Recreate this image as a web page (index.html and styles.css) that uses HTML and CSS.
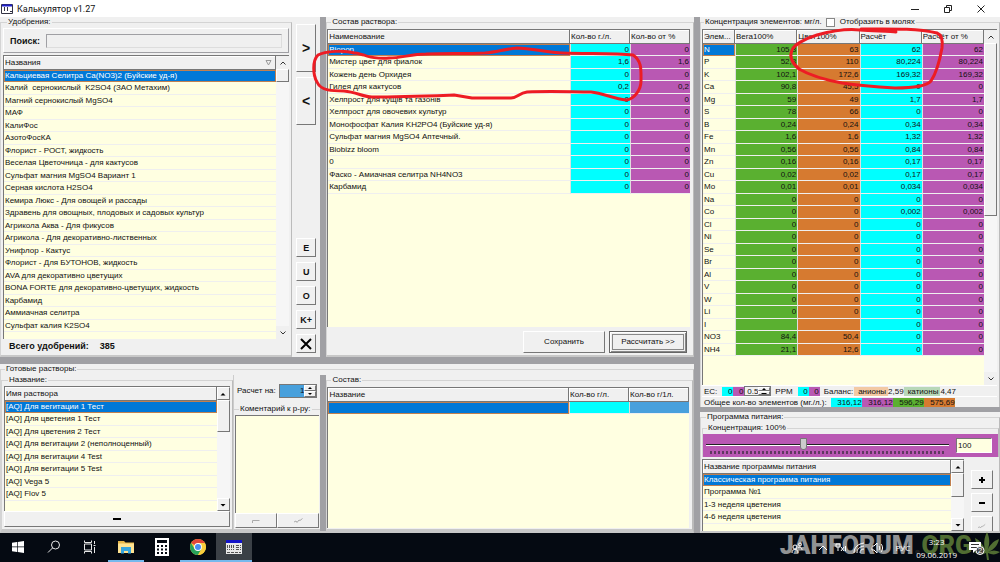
FILE: index.html
```html
<!DOCTYPE html>
<html lang="ru">
<head>
<meta charset="utf-8">
<title>Калькулятор v1.27</title>
<link rel="stylesheet" href="styles.css">
</head>
<body>
<header class="titlebar">
  <svg class="app-icon" viewBox="0 0 12 10"><path fill="#fff" stroke="#334" d="M.5.5h11v9H.5z"/><path stroke="#22c" stroke-width="2" d="M1 1.5h10"/><path stroke="#334" d="M3.500 3v5M6.500 3v5M9 7.500h2" stroke-dasharray="4 1"/></svg>
  <h1>Калькулятор v1.27</h1>
  <div class="window-buttons">
    <button aria-label="Свернуть"><svg viewBox="0 0 10 10"><path d="M1 5.500h8"/></svg></button>
    <button aria-label="Развернуть"><svg viewBox="0 0 10 10"><path d="M1.500 3.500h5v5h-5zM3.500 3.500v-2h5v5h-2"/></svg></button>
    <button aria-label="Закрыть"><svg viewBox="0 0 10 10"><path d="M1.500 1.500l7 7M8.500 1.500l-7 7"/></svg></button>
  </div>
</header>

<main class="workspace">
  <div class="left">
    <div class="upper">
      <fieldset class="group fertilizers">
        <legend>Удобрения:</legend>
        <div class="search"><label for="q">Поиск:</label><input id="q" type="text"></div>
        <div class="list">
          <div class="view"><table class="names">
            <thead><tr><th>Названия<svg class="sort" viewBox="0 0 7 6"><path d="M1 .5h5L3.500 5z"/></svg></th></tr></thead>
            <tbody>
            <tr class="sel"><td>Кальциевая Селитра Ca(NO3)2 (Буйские уд-я)</td></tr>
            <tr><td>Калий&nbsp; сернокислый&nbsp; K2SO4 (ЗАО Метахим)</td></tr>
            <tr><td>Магний сернокислый MgSO4</td></tr>
            <tr><td>МАФ</td></tr>
            <tr><td>КалиФос</td></tr>
            <tr><td>АзотоФосКА</td></tr>
            <tr><td>Флорист - РОСТ, жидкость</td></tr>
            <tr><td>Веселая Цветочница - для кактусов</td></tr>
            <tr><td>Сульфат магния MgSO4 Вариант 1</td></tr>
            <tr><td>Серная кислота H2SO4</td></tr>
            <tr><td>Кемира Люкс - Для овощей и рассады</td></tr>
            <tr><td>Здравень для овощных, плодовых и садовых культур</td></tr>
            <tr><td>Агрикола Аква - Для фикусов</td></tr>
            <tr><td>Агрикола - Для декоративно-лиственных</td></tr>
            <tr><td>Унифлор - Кактус</td></tr>
            <tr><td>Флорист - Для БУТОНОВ, жидкость</td></tr>
            <tr><td>AVA для декоративно цветущих</td></tr>
            <tr><td>BONA FORTE для декоративно-цветущих, жидкость</td></tr>
            <tr><td>Карбамид</td></tr>
            <tr><td>Аммиачная селитра</td></tr>
            <tr><td>Сульфат калия K2SO4</td></tr>
            </tbody>
          </table></div>
          <div class="scroll flat">
            <button aria-label="Вверх"><svg viewBox="0 0 8 8"><path class="chev" d="M1.500 5.500L4 3l2.500 2.500"/></svg></button>
            <i class="thumb short"></i><span></span>
            <button aria-label="Вниз"><svg viewBox="0 0 8 8"><path class="chev" d="M1.500 2.500L4 5l2.500-2.500"/></svg></button>
          </div>
        </div>
        <p class="total"><b>Всего удобрений:</b><b>385</b></p>
      </fieldset>
      <div class="transfer">
        <button class="tall">&gt;</button>
        <button class="tall">&lt;</button>
        <span></span>
        <button>E</button><button>U</button><button>O</button><button>K+</button>
        <button aria-label="Удалить"><svg viewBox="0 0 12 12"><path d="M1 1l10 10M11 1L1 11"/></svg></button>
      </div>
      <i class="vsplit"></i>
      <fieldset class="group solution">
        <legend>Состав раствора:</legend>
        <div class="list">
          <div class="view"><table class="mix">
            <colgroup><col><col class="amount"><col class="amount"></colgroup>
            <thead><tr><th>Наименование</th><th>Кол-во г./л.</th><th>Кол-во от %</th></tr></thead>
            <tbody>
            <tr class="sel"><td>Biopon</td><td>0</td><td>0</td></tr>
            <tr><td>Мистер цвет для фиалок</td><td>1,6</td><td>1,6</td></tr>
            <tr><td>Кожень день Орхидея</td><td>0</td><td>0</td></tr>
            <tr><td>Гилея для кактусов</td><td>0,2</td><td>0,2</td></tr>
            <tr><td>Хелпрост для кущів та газонів</td><td>0</td><td>0</td></tr>
            <tr><td>Хелпрост для овочевих культур</td><td>0</td><td>0</td></tr>
            <tr><td>Монофосфат Калия KH2PO4 (Буйские уд-я)</td><td>0</td><td>0</td></tr>
            <tr><td>Сульфат магния MgSO4 Аптечный.</td><td>0</td><td>0</td></tr>
            <tr><td>Biobizz bloom</td><td>0</td><td>0</td></tr>
            <tr><td>0</td><td>0</td><td>0</td></tr>
            <tr><td>Фаско - Амиачная селитра NH4NO3</td><td>0</td><td>0</td></tr>
            <tr><td>Карбамид</td><td>0</td><td>0</td></tr>
            </tbody>
          </table></div>
        </div>
        <div class="actions"><button>Сохранить</button><button class="default">Рассчитать &gt;&gt;</button></div>
      </fieldset>
    </div>
    <i class="hsplit"></i>
    <fieldset class="group ready">
      <legend>Готовые растворы:</legend>
      <div class="ready-row">
        <fieldset class="group saved">
          <legend>Название:</legend>
          <div class="list">
            <div class="view"><table class="names">
              <thead><tr><th>Имя раствора</th></tr></thead>
              <tbody>
              <tr class="sel"><td>[AQ] Для вегитации 1 Тест</td></tr>
              <tr><td>[AQ] Для цветения 1 Тест</td></tr>
              <tr><td>[AQ] Для цветения 2 Тест</td></tr>
              <tr><td>[AQ] Для вегитации 2 (неполноценный)</td></tr>
              <tr><td>[AQ] Для вегитации 4 Test</td></tr>
              <tr><td>[AQ] Для вегитации 5 Test</td></tr>
              <tr><td>[AQ] Vega 5</td></tr>
              <tr><td>[AQ] Flov 5</td></tr>
              </tbody>
            </table></div>
            <div class="scroll">
              <button aria-label="Вверх"><svg viewBox="0 0 8 8"><path d="M1.500 5.500h5L4 3z"/></svg></button>
              <i class="thumb mid"></i><span></span>
              <button aria-label="Вниз"><svg viewBox="0 0 8 8"><path d="M1.500 3h5L4 5.500z"/></svg></button>
            </div>
          </div>
          <button class="remove" aria-label="Удалить раствор"><svg viewBox="0 0 8 4"><path d="M0 1h8v2H0z"/></svg></button>
        </fieldset>
        <div class="comment">
          <div class="per"><label for="per">Расчет на:</label>
            <span class="spin"><input id="per" type="text" value="1"><span class="steps"><button aria-label="Больше"><svg viewBox="0 0 8 4"><path d="M2 3h4L4 1z"/></svg></button><button aria-label="Меньше"><svg viewBox="0 0 8 4"><path d="M2 1h4L4 3z"/></svg></button></span></span>
          </div>
          <fieldset class="group note">
            <legend><label for="note">Коментарий к р-ру:</label></legend>
            <textarea id="note"></textarea>
            <div class="note-buttons">
              <button disabled aria-label="Отменить"><svg viewBox="0 0 10 6"><path d="M1.500 5V2.500h7"/></svg></button>
              <button disabled aria-label="Принять"><svg viewBox="0 0 10 6"><path d="M1 4l2-1 1 1.500L6 2l1 .5L9.500.5"/></svg></button>
            </div>
          </fieldset>
        </div>
        <i class="vsplit"></i>
        <fieldset class="group content">
          <legend>Состав:</legend>
          <div class="list">
            <div class="view"><table class="mix parts">
              <colgroup><col><col class="amount"><col class="amount"></colgroup>
              <thead><tr><th>Название</th><th>Кол-во г/л.</th><th>Кол-во г/1л.</th></tr></thead>
              <tbody><tr class="sel"><td></td><td></td><td></td></tr></tbody>
            </table></div>
          </div>
        </fieldset>
      </div>
    </fieldset>
  </div>
  <i class="vsplit"></i>
  <div class="right">
    <fieldset class="group elements">
      <legend>Концентрация элементов: мг/л.<input type="checkbox" id="mol"><label for="mol">Отобразить в молях</label></legend>
      <div class="list">
        <div class="view"><table class="conc">
          <colgroup><col class="sym"><col><col><col><col></colgroup>
          <thead><tr><th>Элем...</th><th>Вега100%</th><th>Цвет100%</th><th>Расчёт</th><th>Расчёт от %</th></tr></thead>
          <tbody>
          <tr class="sel"><td>N</td><td>105,3</td><td>63</td><td>62</td><td>62</td></tr>
          <tr><td>P</td><td>52,8</td><td>110</td><td>80,224</td><td>80,224</td></tr>
          <tr><td>K</td><td>102,1</td><td>172,6</td><td>169,32</td><td>169,32</td></tr>
          <tr><td>Ca</td><td>90,8</td><td>45,5</td><td>0</td><td>0</td></tr>
          <tr><td>Mg</td><td>59</td><td>49</td><td>1,7</td><td>1,7</td></tr>
          <tr><td>S</td><td>78</td><td>66</td><td>0</td><td>0</td></tr>
          <tr><td>B</td><td>0,24</td><td>0,24</td><td>0,34</td><td>0,34</td></tr>
          <tr><td>Fe</td><td>1,6</td><td>1,6</td><td>1,32</td><td>1,32</td></tr>
          <tr><td>Mn</td><td>0,56</td><td>0,56</td><td>0,84</td><td>0,84</td></tr>
          <tr><td>Zn</td><td>0,16</td><td>0,16</td><td>0,17</td><td>0,17</td></tr>
          <tr><td>Cu</td><td>0,02</td><td>0,02</td><td>0,17</td><td>0,17</td></tr>
          <tr><td>Mo</td><td>0,01</td><td>0,01</td><td>0,034</td><td>0,034</td></tr>
          <tr><td>Na</td><td>0</td><td>0</td><td>0</td><td>0</td></tr>
          <tr><td>Co</td><td>0</td><td>0</td><td>0,002</td><td>0,002</td></tr>
          <tr><td>Cl</td><td>0</td><td>0</td><td>0</td><td>0</td></tr>
          <tr><td>Ni</td><td>0</td><td>0</td><td>0</td><td>0</td></tr>
          <tr><td>Se</td><td>0</td><td>0</td><td>0</td><td>0</td></tr>
          <tr><td>Br</td><td>0</td><td>0</td><td>0</td><td>0</td></tr>
          <tr><td>Al</td><td>0</td><td>0</td><td>0</td><td>0</td></tr>
          <tr><td>V</td><td>0</td><td>0</td><td>0</td><td>0</td></tr>
          <tr><td>W</td><td>0</td><td>0</td><td>0</td><td>0</td></tr>
          <tr><td>Li</td><td>0</td><td>0</td><td>0</td><td>0</td></tr>
          <tr><td>I</td><td></td><td></td><td>0</td><td>0</td></tr>
          <tr><td>NO3</td><td>84,4</td><td>50,4</td><td>0</td><td>0</td></tr>
          <tr><td>NH4</td><td>21,1</td><td>12,6</td><td>0</td><td>0</td></tr>
          </tbody>
        </table></div>
        <div class="scroll flat">
          <button aria-label="Вверх"><svg viewBox="0 0 8 8"><path class="chev" d="M1.500 5.500L4 3l2.500 2.500"/></svg></button>
          <i class="thumb long"></i><span></span>
          <button aria-label="Вниз"><svg viewBox="0 0 8 8"><path class="chev" d="M1.500 2.500L4 5l2.500-2.500"/></svg></button>
        </div>
      </div>
      <div class="status">
        <label for="ec">EC:</label>
        <span class="pair"><output class="cyan">0</output><output class="violet">0</output></span>
        <span class="spin small"><input id="ec" type="text" value="0.5"><span class="steps"><button aria-label="Больше"><svg viewBox="0 0 8 4"><path d="M1 3h6L4 0z"/></svg></button><button aria-label="Меньше"><svg viewBox="0 0 8 4"><path d="M1 1h6L4 4z"/></svg></button></span></span>
        <span class="ppm">PPM</span>
        <span class="pair"><output class="cyan">0</output><output class="violet">0</output></span>
        <span class="balance">Баланс:</span><span class="anions">анионы</span><span>2,59</span><span class="cations">катионы</span><span>4,47</span>
      </div>
      <div class="status sum"><span>Общее кол-во элементов (мг./л.):</span><output class="cyan">316,12</output><output class="violet">316,12</output><output class="green">596,29</output><output class="orange">575,69</output></div>
    </fieldset>
    <i class="hsplit thin"></i>
    <fieldset class="group program">
      <legend>Программа питания:</legend>
      <fieldset class="group strength">
        <legend><label for="strength">Концентрация: 100%</label></legend>
        <div class="slider">
          <div class="track"><input id="strength" type="range" min="0" max="250" value="100">
            <i class="ticks"></i></div>
          <input class="value" type="text" value="100" aria-label="Концентрация, %">
        </div>
      </fieldset>
      <div class="program-row">
        <div class="list">
          <div class="view"><table class="names">
            <thead><tr><th>Название программы питания</th></tr></thead>
            <tbody>
            <tr class="sel"><td>Классическая программа питания</td></tr>
            <tr><td>Программа №1</td></tr>
            <tr><td>1-3 неделя цветения</td></tr>
            <tr><td>4-6 неделя цветения</td></tr>
            </tbody>
          </table></div>
          <div class="scroll">
            <button aria-label="Вверх"><svg viewBox="0 0 8 8"><path d="M1.500 5.500h5L4 3z"/></svg></button>
            <i class="thumb low"></i><span></span>
            <button aria-label="Вниз"><svg viewBox="0 0 8 8"><path d="M1.500 3h5L4 5.500z"/></svg></button>
          </div>
        </div>
        <div class="program-buttons">
          <button aria-label="Добавить"><svg viewBox="0 0 8 8"><path stroke-width="2" d="M1 4h6M4 1v6"/></svg></button>
          <button aria-label="Удалить"><svg viewBox="0 0 8 8"><path stroke-width="2" d="M1 4h6"/></svg></button>
          <button disabled aria-label="Принять"><svg viewBox="0 0 10 8"><path d="M0 6l2-1 1 1.500L5 4l1 .5L9 2"/></svg></button>
        </div>
      </div>
    </fieldset>
  </div>
</main>

<footer class="taskbar">
  <nav class="apps">
    <button aria-label="Пуск"><svg viewBox="0 0 16 16"><path fill="#fff" d="M2 3.700l5-.7v4.600H2zM7.700 2.900L14 2v5.600H7.700zM2 8.300h5V13l-5-.7zM7.700 8.300H14V14l-6.300-.9z"/></svg></button>
    <button aria-label="Поиск"><svg viewBox="0 0 16 16"><circle cx="9.500" cy="6" r="4" class="line"/><path class="line" d="M6.600 8.900L2 13.500"/></svg></button>
    <button aria-label="Представление задач"><svg viewBox="0 0 16 16"><path class="line" d="M2.500 5h7v6h-7zM2.500 1.500v2h7v-2M2.500 14.500v-2h7v2M12.500 2v3M12.500 8v6M11.500 6.500h2"/></svg></button>
    <button class="open" aria-label="Проводник"><svg viewBox="0 0 16 16"><path fill="#e8b84a" d="M0 2h6l1.500 1.500H16V14H0z"/><path fill="#ffe391" d="M0 4.500h16V14H0z"/><path fill="#37a5dd" d="M3 8h10v6.500h-3V12H6v2.500H3z"/></svg></button>
    <button aria-label="Калькулятор"><svg class="calc" viewBox="0 0 14 18"><path fill="#fff" d="M0 0h14v18H0z"/><path fill="#050a12" d="M2 2h10v3H2z"/><path stroke="#050a12" stroke-width="2" stroke-dasharray="2 2" d="M2 8h11M2 11.500h11M2 15h11"/></svg></button>
    <button class="open" aria-label="Chrome"><svg viewBox="0 0 16 16"><circle cx="8" cy="8" r="8" fill="#f9ce3c"/><path fill="#e3473a" d="M8 8L1.100 4A8 8 0 0 1 14.900 4H8z"/><path fill="#26a25a" d="M8 8L4.600 10 1.100 4A8 8 0 0 0 8 16l3.500-6z"/><path fill="#f9ce3c" d="M8 4h6.900A8 8 0 0 1 8 16l3.500-6z"/><circle cx="8" cy="8" r="3.900" fill="#fff"/><circle cx="8" cy="8" r="3" fill="#4a8df0"/></svg></button>
    <button class="open current" aria-label="Калькулятор v1.27"><svg viewBox="0 0 16 16"><path fill="#e8e8e8" d="M0 1h16v14H0z"/><path fill="#1414c8" d="M0 1h16v3H0z"/><path stroke="#555" fill="none" d="M1.500 6v5M3.500 6v5M5.500 6v5M7.500 6v5M10 6.500h5M10 8.500h5M10 10.500h5M1 13.500h14" stroke-dasharray="3 1"/></svg></button>
  </nav>
  <div class="tray">
    <svg class="people" viewBox="0 0 12 12"><circle cx="4" cy="5" r="2"/><circle cx="9" cy="2.500" r="1.500"/><path d="M1 11c0-5 6-5 6 0M7 6c2-2 4 0 4 2"/></svg>
    <svg viewBox="0 0 12 12"><path d="M2 8l4-4 4 4"/></svg>
    <svg viewBox="0 0 12 12"><path d="M1 2h4v3H1zM3 5v4M6 5l3 4M9 5L6 9M10.500 4v5"/></svg>
    <svg viewBox="0 0 12 12"><path d="M1 11C1 5 5 2 11 1M4 11c0-4 2-6 7-7M7 11c0-2 1-4 4-4"/></svg>
    <svg viewBox="0 0 12 12"><path d="M1 4h2l3-3v10L3 8H1zM8 4c1 1 1 3 0 4M10 2c2 2 2 6 0 8"/></svg>
    <span class="lang">РУС</span>
    <time class="clock"><span>3:23</span><span>09.06.2019</span></time>
    <svg class="notes" viewBox="0 0 16 14"><path fill="#fff" stroke="none" d="M0 1h12v8H7l-3 3V9H0z"/><path stroke="#333" d="M2 3.500h8M2 6.500h8"/><circle cx="11" cy="9.500" r="4" fill="#444"/><text x="11" y="12" class="count">2</text></svg>
  </div>
</footer>

<div class="watermark">JAHFORUM<span class="dot">.</span><span class="org">ORG</span><svg viewBox="0 0 28 28"><path d="M14 20C11 13 12 6 15 0c3 6 3 13 0 19 2-5 6-10 12-12-1 6-5 11-11 13 4-2 8-2 12 0-4 3-8 3-12 1l1 7h-2l-1-7c-4 2-8 2-12-1 4-2 8-2 11-1C7 17 4 12 3 6c6 3 9 8 11 14z"/></svg></div>

<svg class="markup" viewBox="0 0 1000 562" preserveAspectRatio="none">
  <path d="M354 53C345 50 325 51 318 55c-6 6-5 20-1 27 4 9 16 9 27 9 12 1 20 6 28 6 30 0 55-1 82-2l18 3h39c6 0 8-5 16-6 24-1 46 0 64 0 12 1 23 7 35 8 9-1 15-11 15-19 0-11 1-20-8-26-18-2-46-1-71-2-14 0-30-5-45-5-12 1-20 4-32 5-20 1-42 0-59 1-15 0-24 4-37 4-10 1-21-1-25-3-3 0-5-2-9-2z"/>
  <path d="M896 32c-4-1-21-1-36-2-16-2-32 2-43 5-13 4-23 10-25 15-3 7 1 14 7 19 12 7 27 11 43 14 20 3 36 4 53 5 14 0 31-1 36-7 6-9 9-22 11-33 1-8 0-13-5-15-22-5-48-4-76-4"/>
</svg>
</body>
</html>
```
FILE: styles.css
```css
:root {
  --face: #f0f0f0;
  --grey: #a0a0a4;
  --dark: #777;
  --cream: #ffffe1;
  --select: #0078d7;
  --cyan: #00ffff;
  --violet: #b958b3;
  --green: #5ab030;
  --orange: #d67a30;
}
* { box-sizing: border-box; }
body {
  margin: 0;
  height: 100vh;
  display: flex;
  flex-direction: column;
  overflow: hidden;
  background: var(--face);
  color: #111;
  font: 8px/10px "Liberation Sans", Arial, sans-serif;
}
button, input, textarea { font: inherit; color: inherit; margin: 0; padding: 0; border-radius: 0; }
svg { display: block; }
p { margin: 0; }

.titlebar { display: flex; align-items: center; height: 17px; padding: 0 1px; background: #fff; flex: none; }
.app-icon { width: 12px; height: 10px; }
.titlebar h1 { flex: 1; margin: 0; padding-left: 4px; font: 9px/16px Roboto, "Noto Sans", sans-serif; }
.window-buttons { display: flex; gap: 13px; padding-right: 8px; }
.window-buttons button { width: 20px; height: 16px; border: 0; background: none; display: grid; place-items: center; }
.window-buttons svg { width: 10px; height: 10px; fill: none; stroke: #222; }

.workspace { flex: 1; min-height: 0; display: flex; }
.left { flex: 694 1 0; min-width: 0; display: flex; flex-direction: column; }
.right { flex: 300 1 0; min-width: 0; display: flex; flex-direction: column; }
.vsplit { width: 6px; flex: none; background: var(--grey); }
.hsplit { height: 7px; flex: none; background: var(--grey); }
.hsplit.thin { height: 5px; }

.upper { flex: 341 1 0; min-height: 0; display: flex; }

.group {
  margin: 0;
  padding: 1px 2px 2px;
  min-width: 0;
  min-height: 0;
  border: 1px solid #d4d4d4;
  border-right-color: #bbb;
  border-bottom: 2px solid #c8c8c8;
  display: flex;
  flex-direction: column;
}
.group legend { margin-left: 4px; padding: 0 1px; line-height: 10px; display: flex; align-items: center; }

.fertilizers { flex: 291 1 0; }
.solution { flex: 369 1 0; padding: 2px 3px 1px 0; }
.search {
  display: flex; align-items: center; gap: 6px; height: 25px; margin-bottom: 2px; padding: 0 6px;
  border: 1px solid #fff; border-right-color: var(--grey); border-bottom-color: var(--grey);
}
.search label, .total { font-size: 9px; font-weight: bold; }
.search input { flex: 1; min-width: 0; height: 14px; background: var(--face); border: 1px solid var(--grey); border-right-color: #ddd; border-bottom-color: #ddd; }
.total { display: flex; align-items: center; gap: 11px; height: 14px; padding-left: 6px; }

.list { flex: 1; min-height: 0; display: flex; background: var(--cream); border-left: 1px solid var(--dark); border-top: 1px solid var(--dark); }
.view { flex: 1; min-width: 0; overflow: hidden; }
table { width: 100%; table-layout: fixed; border-collapse: separate; border-spacing: 0; }
tr { height: 12px; }
tr:nth-child(even) { height: 13px; }
thead tr { height: 14px; }
th, td { padding: 0 1px; overflow: hidden; white-space: nowrap; line-height: 10px; }
th {
  background: var(--face); font-weight: normal; text-align: left;
  border: solid var(--dark); border-width: 0 1px 1px 0; box-shadow: inset 1px 1px #fff;
}
td { border-bottom: 1px solid #efefef; text-align: right; }
td + td { border-left: 1px solid #dedede; }
td:first-child { text-align: left; }
.sel td:first-child { background: var(--select); color: #fff; border: 1px solid #c08050; padding: 0; line-height: 8px; }
.sort { float: right; width: 7px; height: 6px; margin: 2px; fill: none; stroke: #999; }
.amount { width: 60px; }
.mix td:nth-child(2) { background: var(--cyan); }
.mix td:nth-child(3) { background: var(--violet); }
.parts td:nth-child(3) { background: #48a0dc; }
.sym { width: 32px; }
.conc td:nth-child(2) { background: var(--green); }
.conc td:nth-child(3) { background: var(--orange); }
.conc td:nth-child(4) { background: var(--cyan); }
.conc td:nth-child(5) { background: var(--violet); }

.scroll { width: 13px; flex: none; display: flex; flex-direction: column; background: #f6f6f6; }
.scroll span { flex: 1; }
.scroll svg { width: 8px; height: 8px; }
.scroll .chev { fill: none; stroke: #333; }
.scroll button, .thumb, .transfer button, .actions button, .remove, .note-buttons button, .program-buttons button, .steps button {
  background: var(--face);
  border: 1px solid #fff;
  border-right-color: var(--dark);
  border-bottom-color: var(--dark);
  display: grid;
  place-items: center;
}
.scroll button { height: 13px; }
.scroll.flat button { border-color: transparent; }
.thumb.short { height: 13px; }
.thumb.mid { height: 32px; }
.thumb.low { height: 24px; }
.thumb.long { height: 173px; }

.transfer { width: 28px; flex: none; display: flex; flex-direction: column; align-items: center; gap: 5px; padding: 7px 0 4px; }
.transfer span { flex: 1; }
.transfer button { width: 20px; height: 19px; font: bold 9px/10px "Liberation Sans", Arial, sans-serif; }
.transfer .tall { height: 48px; font-size: 14px; }
.transfer svg { width: 12px; height: 12px; stroke: #000; stroke-width: 2; }

.actions { display: flex; justify-content: flex-end; gap: 4px; padding: 4px 3px 1px; }
.actions button { width: 82px; height: 22px; }
.actions .default { width: 78px; border: 1px solid #666; outline: 1px solid #888; outline-offset: -4px; box-shadow: inset 1px 1px #fff, inset -1px -1px #888; }

.ready { flex: 165 1 0; padding: 1px 0 0; }
.ready-row { flex: 1; min-height: 0; display: flex; }
.saved { flex: 230 1 0; }
.content { flex: 368 1 0; padding: 2px 3px 1px 0; }
.remove { height: 16px; }
.remove svg { width: 8px; height: 4px; }
.comment { flex: 88 1 0; min-width: 0; display: flex; flex-direction: column; border-left: 1px solid #ccc; }
.per { display: flex; align-items: center; gap: 3px; height: 29px; padding: 2px 3px 0; }
.per label { white-space: nowrap; }
.spin { display: flex; flex: 1; min-width: 0; height: 14px; border: 1px solid var(--dark); background: var(--face); }
.spin input { flex: 1; min-width: 0; width: 10px; border: 0; background: #48a0dc; text-align: right; }
.steps { width: 12px; display: grid; grid-template-rows: 1fr 1fr; }
.steps button { min-height: 0; overflow: hidden; }
.steps svg { width: 8px; height: 4px; }
.note { flex: 1; border-width: 1px 0 2px; padding: 1px; }
.note textarea { flex: 1; min-height: 0; width: 100%; resize: none; background: var(--cream); border: 1px solid var(--dark); border-width: 1px 0 0 1px; }
.note-buttons { display: flex; }
.note-buttons button { flex: 1; height: 15px; }
.note-buttons svg { width: 10px; height: 6px; fill: none; stroke: #aaa; }

.elements { flex: 388 1 0; padding: 2px 2px 0 1px; border-bottom-width: 0; }
.elements legend { margin-left: 2px; }
.elements legend input { width: 9px; height: 9px; margin: 0 5px 0 4px; appearance: none; background: #fff; border: 1px solid #888; }
.status { display: flex; align-items: center; height: 11px; padding-left: 2px; white-space: nowrap; border-top: 1px solid #fff; line-height: 9px; }
.status .pair { display: flex; margin-left: 5px; }
.status .pair output { width: 11px; padding-right: 1px; text-align: right; }
.status .spin { flex: none; width: 27px; height: 10px; }
.status .spin input { background: var(--face); }
.status .ppm { padding-left: 4px; }
.balance { padding: 0 1px 0 4px; }
.anions, .cations { padding: 0 2px 0 4px; background: #f3c9a4; }
.cations { background: #b8d8b8; }
.sum output { width: 31px; text-align: right; }
.sum span { padding-right: 4px; }
.cyan { background: var(--cyan); }
.violet { background: var(--violet); }
.green { background: var(--green); }
.orange { background: var(--orange); }

.program { flex: 117 1 0; padding: 1px 0 0 1px; }
.strength { border-bottom-width: 0; padding: 1px 0 0; flex: none; }
.slider { display: flex; align-items: center; gap: 7px; height: 23px; padding: 0 6px 0 3px; background: var(--violet); }
.track { flex: 1; min-width: 0; }
.track input { display: block; width: 100%; height: 13px; appearance: none; background: linear-gradient(#222, #222) 0 6px / 100% 1px no-repeat, linear-gradient(#fff, #fff) 0 7px / 100% 1px no-repeat; }
.track input::-webkit-slider-thumb { appearance: none; width: 7px; height: 12px; background: #ccc; border: 1px solid #777; border-radius: 0 0 3px 3px; }
.ticks { display: block; height: 3px; margin: 0 4px; background: repeating-linear-gradient(90deg, #603860 0 2px, transparent 2px 4px); }
.value { width: 36px; height: 15px; padding-left: 1px; background: var(--cream); border: 1px solid var(--dark); border-right-color: #fff; border-bottom-color: #fff; }
.program-row { flex: 1; min-height: 0; display: flex; padding-top: 2px; }
.program-buttons { width: 35px; flex: none; display: flex; flex-direction: column; gap: 4px; align-items: center; padding-top: 11px; overflow: hidden; }
.program-buttons button { width: 22px; height: 19px; flex: none; }
.program-buttons svg { width: 8px; height: 8px; stroke: #000; fill: none; }
.program-buttons button:disabled svg { stroke: #aaa; }

.taskbar { height: 29px; flex: none; display: flex; justify-content: space-between; background: #050a12; color: #fff; }
.apps { display: flex; }
.apps button { width: 36px; border: 0; background: none; display: grid; place-items: center; border-bottom: 2px solid transparent; }
.apps svg { width: 16px; height: 16px; }
.apps .calc { width: 14px; height: 18px; }
.apps .open { border-color: #76b9ed; }
.apps .current { background: #3b4046; }
.line { fill: none; stroke: #e8e8e8; }
.tray { position: relative; z-index: 1; display: flex; align-items: center; gap: 6px; padding-right: 15px; }
.tray svg { width: 12px; height: 12px; fill: none; stroke: #fff; }
.tray .people { margin-right: 8px; }
.tray .notes { width: 16px; height: 14px; margin-left: 6px; }
.count { font-size: 8px; fill: #fff; stroke: none; text-anchor: middle; }
.lang, .clock { font: 8px/13px "Open Sans", "Noto Sans", sans-serif; }
.lang { margin-left: 6px; }
.clock { display: flex; flex-direction: column; align-items: center; }

/* Site mark laid over the desktop */
.watermark {
  position: absolute; right: 0; bottom: 2px; display: flex; align-items: center;
  font: 900 25px/28px Roboto, "Liberation Sans", sans-serif;
  color: #b4b4b4; opacity: .8; pointer-events: none;
}
.watermark .dot { color: #222; }
.watermark .org { color: #63863a; }
.watermark svg { width: 28px; height: 28px; fill: #63863a; }

/* Hand-drawn marks over the tables */
.markup { position: absolute; inset: 0; width: 100%; height: 100%; pointer-events: none; fill: none; stroke: #ed1c24; stroke-width: 3; stroke-linecap: round; stroke-linejoin: round; }
```
